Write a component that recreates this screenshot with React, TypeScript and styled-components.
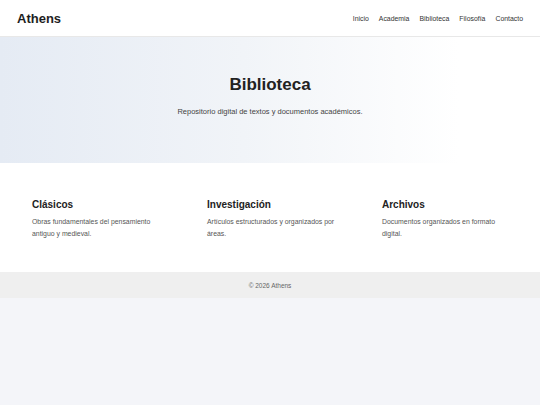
import styled, { createGlobalStyle } from 'styled-components';

const GlobalStyle = createGlobalStyle`
    html, body {
        margin: 0;
        padding: 0;
        background: #f4f5f9;
        font-family: "Liberation Sans", Arial, sans-serif;
        color: #222;
    }
`;

const Header = styled.header`
    display: flex;
    justify-content: space-between;
    align-items: center;
    height: 36px;
    padding: 0 17px;
    background: #fff;
    border-bottom: 1px solid #e8e8e8;
`;

const Logo = styled.div`
    font-size: 13px;
    font-weight: 700;
    color: #1e1e1e;
`;

const Nav = styled.nav`
    display: flex;
    gap: 10px;
`;

const NavLink = styled.a`
    font-size: 6.9px;
    color: #333;
    text-decoration: none;
`;

const Hero = styled.section`
    padding: 38px 20px 46px;
    text-align: center;
    background: linear-gradient(90deg, #e5ebf4 0%, #f1f4f8 45%, #ffffff 85%);
`;

const Title = styled.h1`
    margin: 0;
    font-size: 17px;
    line-height: 20px;
    font-weight: 700;
    color: #222;
`;

const Subtitle = styled.p`
    margin: 12px 0 0;
    font-size: 7.5px;
    line-height: 10px;
    color: #444;
`;

const Features = styled.section`
    display: grid;
    grid-template-columns: repeat(3, 128px);
    column-gap: 47px;
    padding: 36px 32px 32px;
    background: #fff;
`;

const Feature = styled.div`
    display: flex;
    flex-direction: column;
    gap: 5px;
`;

const FeatureTitle = styled.h3`
    margin: 0;
    font-size: 10px;
    line-height: 12px;
    font-weight: 700;
    color: #222;
`;

const FeatureText = styled.p`
    margin: 0;
    font-size: 6.9px;
    line-height: 12px;
    color: #555;
`;

const Footer = styled.footer`
    height: 26px;
    display: flex;
    align-items: center;
    justify-content: center;
    background: #efefef;
    font-size: 6.5px;
    color: #666;
`;

const links = ['Inicio', 'Academia', 'Biblioteca', 'Filosofía', 'Contacto'];

const features = [
    { title: 'Clásicos', text: 'Obras fundamentales del pensamiento antiguo y medieval.' },
    { title: 'Investigación', text: 'Artículos estructurados y organizados por áreas.' },
    { title: 'Archivos', text: 'Documentos organizados en formato digital.' },
];

export default function App() {
    return (
        <>
            <GlobalStyle />
            <Header>
                <Logo>Athens</Logo>
                <Nav>
                    {links.map((l) => (
                        <NavLink key={l} href="#">{l}</NavLink>
                    ))}
                </Nav>
            </Header>
            <Hero>
                <Title>Biblioteca</Title>
                <Subtitle>Repositorio digital de textos y documentos académicos.</Subtitle>
            </Hero>
            <Features>
                {features.map((f) => (
                    <Feature key={f.title}>
                        <FeatureTitle>{f.title}</FeatureTitle>
                        <FeatureText>{f.text}</FeatureText>
                    </Feature>
                ))}
            </Features>
            <Footer>© 2026 Athens</Footer>
        </>
    );
}
